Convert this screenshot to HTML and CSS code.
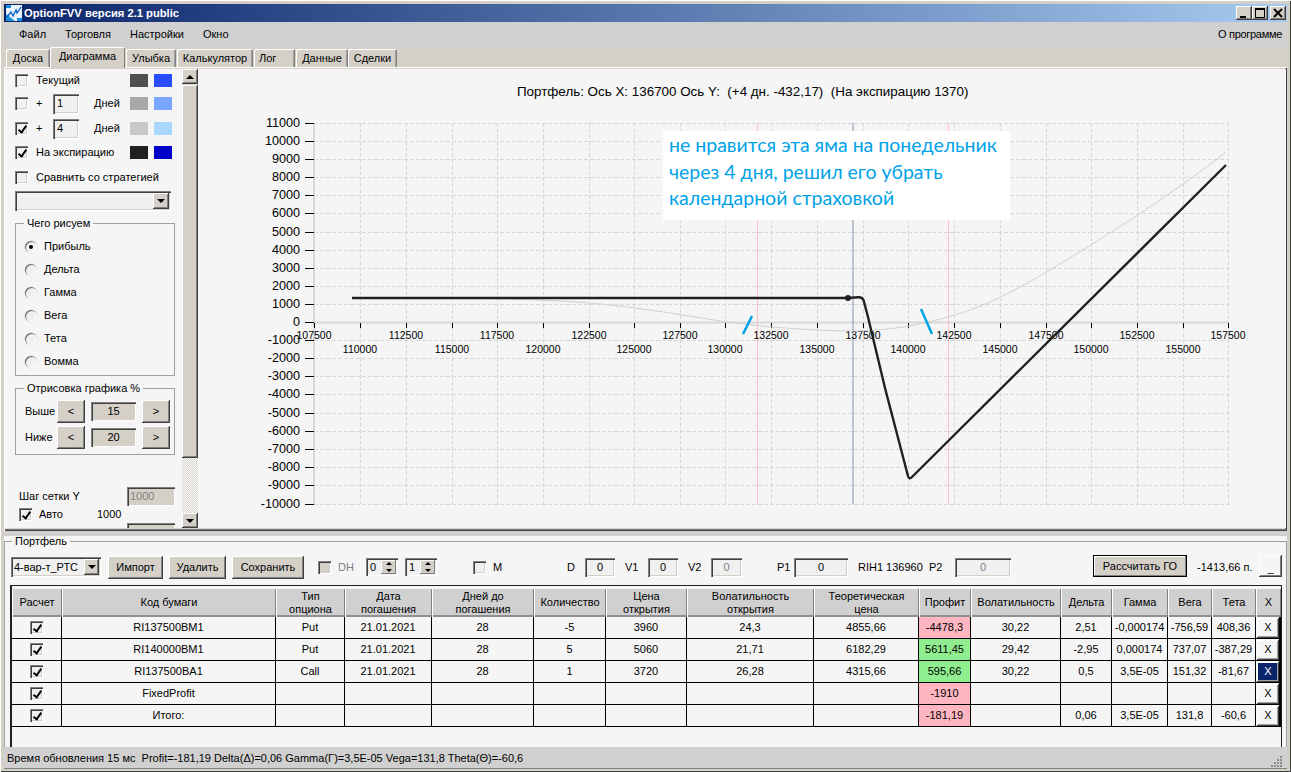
FILE: index.html
```html
<!DOCTYPE html>
<html lang="ru">
<head>
<meta charset="utf-8">
<title>OptionFVV</title>
<link rel="stylesheet" href="styles.css">
</head>
<body>
<div class="window">
  <header class="titlebar">
    <svg class="appicon" viewBox="0 0 16 16"><rect width="16" height="16" fill="#e8f4ff"/><path d="M0 0h5v3H0zM11 13h5v3h-5z" fill="#1a8fe0"/><path d="M0 9v7h9z" fill="#1a8fe0"/><path d="M1 12l4-5 2 4 3-6 1 3 4-6" fill="none" stroke="#0a5fc0" stroke-width="1.3"/></svg>
    <span class="apptitle">OptionFVV версия 2.1 public</span>
    <div class="winbtns">
      <span class="winbtn"><svg viewBox="0 0 16 14"><path d="M4 10h6v2H4z"/></svg></span>
      <span class="winbtn"><svg viewBox="0 0 16 14"><path d="M3 2h10v10H3zM4 4v7h8V4z" fill-rule="evenodd"/></svg></span>
      <span class="winbtn close"><svg viewBox="0 0 16 14"><path d="M4 3l8 8M12 3l-8 8" stroke="#000" stroke-width="2"/></svg></span>
    </div>
  </header>
  <nav class="menubar">
    <span class="mi m1">Файл</span><span class="mi m2">Торговля</span><span class="mi m3">Настройки</span><span class="mi m4">Окно</span>
    <span class="about">О программе</span>
  </nav>
  <div class="tabs">
    <span class="tab t1">Доска</span><span class="tab t2 active">Диаграмма</span><span class="tab t3">Улыбка</span><span class="tab t4">Калькулятор</span><span class="tab t5">Лог</span><span class="tab t6">Данные</span><span class="tab t7">Сделки</span>
  </div>
  <main class="panel">
    <aside class="sidebar">
      <div class="row r1"><span class="cb"></span><span class="lab">Текущий</span><span class="sw s1a"></span><span class="sw s1b"></span></div>
      <div class="row r2"><span class="cb"></span><span class="plus">+</span><span class="edit dayedit">1</span><span class="days">Дней</span><span class="sw s2a"></span><span class="sw s2b"></span></div>
      <div class="row r3"><span class="cb on"></span><span class="plus">+</span><span class="edit dayedit">4</span><span class="days">Дней</span><span class="sw s3a"></span><span class="sw s3b"></span></div>
      <div class="row r4"><span class="cb on"></span><span class="lab">На экспирацию</span><span class="sw s4a"></span><span class="sw s4b"></span></div>
      <div class="row r5"><span class="cb"></span><span class="lab">Сравнить со стратегией</span></div>
      <div class="combo sidecombo"><span class="drop"><i></i></span></div>
      <fieldset class="group radios">
        <legend>Чего рисуем</legend>
        <div class="radio"><span class="rb on"></span>Прибыль</div>
        <div class="radio"><span class="rb"></span>Дельта</div>
        <div class="radio"><span class="rb"></span>Гамма</div>
        <div class="radio"><span class="rb"></span>Вега</div>
        <div class="radio"><span class="rb"></span>Тета</div>
        <div class="radio"><span class="rb"></span>Вомма</div>
      </fieldset>
      <fieldset class="group drawing">
        <legend>Отрисовка графика %</legend>
        <div class="stepper"><span class="steplab">Выше</span><span class="btn stepbtn">&lt;</span><span class="stepval">15</span><span class="btn stepbtn">&gt;</span></div>
        <div class="stepper"><span class="steplab">Ниже</span><span class="btn stepbtn">&lt;</span><span class="stepval">20</span><span class="btn stepbtn">&gt;</span></div>
      </fieldset>
      <div class="gridstep"><span>Шаг сетки Y</span><span class="edit gridedit">1000</span></div>
      <div class="auto"><span class="cb on"></span><span class="autolab">Авто</span><span class="autoval">1000</span></div>
      <div class="edit gridedit cutedit"></div>
    </aside>
    <div class="scrollbar">
      <span class="sbtn"><i class="up"></i></span>
      <span class="sthumb"></span>
      <span class="strack"></span>
      <span class="sbtn"><i></i></span>
    </div>
    <div class="chart">
      <svg class="plot" viewBox="198 69 1088 461" width="1088" height="461">
        <text class="title" x="517" y="96">Портфель: Ось X: 136700 Ось Y:  (+4 дн. -432,17)  (На экспирацию 1370)</text>
        <path class="grid" d="M360.5 123V504M406.5 123V504M452.5 123V504M497.5 123V504M543.5 123V504M589.5 123V504M634.5 123V504M680.5 123V504M725.5 123V504M771.5 123V504M817.5 123V504M863.5 123V504M908.5 123V504M954.5 123V504M1000.5 123V504M1046.5 123V504M1091.5 123V504M1137.5 123V504M1183.5 123V504M1228.5 123V504M314 123.5H1229M314 141.5H1229M314 159.5H1229M314 177.5H1229M314 195.5H1229M314 213.5H1229M314 232.5H1229M314 250.5H1229M314 268.5H1229M314 286.5H1229M314 304.5H1229M314 340.5H1229M314 358.5H1229M314 376.5H1229M314 394.5H1229M314 413.5H1229M314 431.5H1229M314 449.5H1229M314 467.5H1229M314 485.5H1229M314 504.5H1229"/>
        <path class="axis" d="M314 123V504M314 322.5H1229"/>
        <path class="ticks" d="M305 123.5h9M305 141.5h9M305 159.5h9M305 177.5h9M305 195.5h9M305 213.5h9M305 232.5h9M305 250.5h9M305 268.5h9M305 286.5h9M305 304.5h9M305 322.5h9M305 340.5h9M305 358.5h9M305 376.5h9M305 394.5h9M305 413.5h9M305 431.5h9M305 449.5h9M305 467.5h9M305 485.5h9M305 504.5h9M314.5 323v5M360.5 323v5M406.5 323v5M452.5 323v5M497.5 323v5M543.5 323v5M589.5 323v5M634.5 323v5M680.5 323v5M725.5 323v5M771.5 323v5M817.5 323v5M863.5 323v5M908.5 323v5M954.5 323v5M1000.5 323v5M1046.5 323v5M1091.5 323v5M1137.5 323v5M1183.5 323v5M1228.5 323v5"/>
        <path class="vpink" d="M757.5 123V504M948.5 123V504"/>
        <path class="vblue" d="M853 123V504"/>
        <g class="ylab">
          <text x="300" y="127">11000</text><text x="300" y="145">10000</text><text x="300" y="163">9000</text><text x="300" y="181">8000</text><text x="300" y="199">7000</text><text x="300" y="217">6000</text><text x="300" y="236">5000</text><text x="300" y="254">4000</text><text x="300" y="272">3000</text><text x="300" y="290">2000</text><text x="300" y="308">1000</text><text x="300" y="326">0</text><text x="300" y="344">-1000</text><text x="300" y="362">-2000</text><text x="300" y="380">-3000</text><text x="300" y="398">-4000</text><text x="300" y="417">-5000</text><text x="300" y="435">-6000</text><text x="300" y="453">-7000</text><text x="300" y="471">-8000</text><text x="300" y="489">-9000</text><text x="300" y="508">-10000</text>
        </g>
        <g class="xlab">
          <text x="314" y="339">107500</text><text x="406" y="339">112500</text><text x="497" y="339">117500</text><text x="589" y="339">122500</text><text x="680" y="339">127500</text><text x="771" y="339">132500</text><text x="863" y="339">137500</text><text x="954" y="339">142500</text><text x="1046" y="339">147500</text><text x="1137" y="339">152500</text><text x="1228" y="339">157500</text>
          <text x="360" y="353">110000</text><text x="452" y="353">115000</text><text x="543" y="353">120000</text><text x="634" y="353">125000</text><text x="725" y="353">130000</text><text x="817" y="353">135000</text><text x="908" y="353">140000</text><text x="1000" y="353">145000</text><text x="1091" y="353">150000</text><text x="1183" y="353">155000</text>
        </g>
        <path class="curve4" d="M352 298C430 297 500 298 560 301C620 304 670 313 720 321C770 328 820 331 855 331C890 331 925 324 955 315C985 306 1015 291 1050 270C1100 240 1170 196 1226 152"/>
        <path class="curve0" d="M352 298H848L858 297.3Q862 297 863.5 300L868 317L885 388L908 476Q909 480 912 477L1226 165"/>
        <circle class="dot" cx="848" cy="298" r="3"/>
        <path class="mark" d="M743 334L752 316M921 309L932 334"/>
        <rect class="notebox" x="663" y="131" width="347" height="89"/>
        <text class="note" x="669" y="152">не нравится эта яма на понедельник</text>
        <text class="note" x="669" y="179">через 4 дня, решил его убрать</text>
        <text class="note" x="669" y="205">календарной страховкой</text>
      </svg>
    </div>
  </main>
  <div class="splitter"></div>
  <section class="portfolio">
    <fieldset class="pbox">
      <legend>Портфель</legend>
      <div class="toolbar">
        <div class="combo pcombo"><span class="ctext">4-вар-т_РТС</span><span class="drop"><i></i></span></div>
        <span class="btn tb b1">Импорт</span>
        <span class="btn tb b2">Удалить</span>
        <span class="btn tb b3">Сохранить</span>
        <span class="cb dis dhcb"></span><span class="grey dh">DH</span>
        <span class="spin sp1"><span class="spv">0</span><span class="spa"><i class="up"></i><i></i></span></span>
        <span class="spin sp2"><span class="spv">1</span><span class="spa"><i class="up"></i><i></i></span></span>
        <span class="cb mcb"></span><span class="ml">M</span>
        <span class="fl fd">D</span><span class="edit val ed">0</span>
        <span class="fl fv1">V1</span><span class="edit val ed">0</span>
        <span class="fl fv2">V2</span><span class="edit val ed2 off">0</span>
        <span class="fl fp1">P1</span><span class="edit val ep">0</span>
        <span class="fl fr">RIH1 136960&nbsp; P2</span><span class="edit val ep2 off">0</span>
        <span class="btn gobtn">Рассчитать ГО</span>
        <span class="gores">-1413,66 п.</span>
        <span class="btn minbtn">_</span>
      </div>
      <div class="tablewrap">
        <table class="grid-table">
          <colgroup>
            <col class="c1"><col class="c2"><col class="c3"><col class="c4"><col class="c5"><col class="c6"><col class="c7"><col class="c8"><col class="c9"><col class="c10"><col class="c11"><col class="c12"><col class="c13"><col class="c14"><col class="c15"><col class="c16">
          </colgroup>
          <thead>
            <tr><th>Расчет</th><th>Код бумаги</th><th>Тип<br>опциона</th><th>Дата<br>погашения</th><th>Дней до<br>погашения</th><th>Количество</th><th>Цена<br>открытия</th><th>Волатильность<br>открытия</th><th>Теоретическая<br>цена</th><th>Профит</th><th>Волатильность</th><th>Дельта</th><th>Гамма</th><th>Вега</th><th>Тета</th><th>X</th></tr>
          </thead>
          <tbody>
            <tr><td><span class="cb on"></span></td><td>RI137500BM1</td><td>Put</td><td>21.01.2021</td><td>28</td><td>-5</td><td>3960</td><td>24,3</td><td>4855,66</td><td class="loss">-4478,3</td><td>30,22</td><td>2,51</td><td>-0,000174</td><td>-756,59</td><td>408,36</td><td class="xc"><span class="xbtn">X</span></td></tr>
            <tr><td><span class="cb on"></span></td><td>RI140000BM1</td><td>Put</td><td>21.01.2021</td><td>28</td><td>5</td><td>5060</td><td>21,71</td><td>6182,29</td><td class="gain">5611,45</td><td>29,42</td><td>-2,95</td><td>0,000174</td><td>737,07</td><td>-387,29</td><td class="xc"><span class="xbtn">X</span></td></tr>
            <tr><td><span class="cb on"></span></td><td>RI137500BA1</td><td>Call</td><td>21.01.2021</td><td>28</td><td>1</td><td>3720</td><td>26,28</td><td>4315,66</td><td class="gain">595,66</td><td>30,22</td><td>0,5</td><td>3,5E-05</td><td>151,32</td><td>-81,67</td><td class="xc"><span class="xbtn sel">X</span></td></tr>
            <tr><td><span class="cb on"></span></td><td>FixedProfit</td><td></td><td></td><td></td><td></td><td></td><td></td><td></td><td class="loss">-1910</td><td></td><td></td><td></td><td></td><td></td><td class="xc"><span class="xbtn">X</span></td></tr>
            <tr><td><span class="cb on"></span></td><td>Итого:</td><td></td><td></td><td></td><td></td><td></td><td></td><td></td><td class="loss">-181,19</td><td></td><td>0,06</td><td>3,5E-05</td><td>131,8</td><td>-60,6</td><td class="xc"><span class="xbtn">X</span></td></tr>
          </tbody>
        </table>
      </div>
    </fieldset>
  </section>
  <footer class="status">
    <span>Время обновления 15 мс&nbsp; Profit=-181,19 Delta(Δ)=0,06 Gamma(Γ)=3,5E-05 Vega=131,8 Theta(Θ)=-60,6</span>
    <svg class="gripper" viewBox="0 0 12 12"><path d="M9 1h2v2H9zM6 4h2v2H6zM9 4h2v2H9zM3 7h2v2H3zM6 7h2v2H6zM9 7h2v2H9zM0 10h2v2H0zM3 10h2v2H3zM6 10h2v2H6zM9 10h2v2H9z" fill="#8a8a8a"/></svg>
  </footer>
</div>
</body>
</html>
```
FILE: styles.css
```css
* { box-sizing: border-box; }
html, body { margin: 0; padding: 0; }
body { font: 11px/13px "Liberation Sans", Arial, sans-serif; color: #000; background: #d4d0c8; }
.window {
  width: 1291px; height: 772px; padding: 4px 4px 3px; background: #d4d0c8;
  display: flex; flex-direction: column; overflow: hidden;
  box-shadow: inset 1px 1px #fff, inset -1px -1px #404040;
}

.titlebar {
  height: 18px; flex: none; display: flex; align-items: center; padding: 0 1px 0 2px;
  background: linear-gradient(90deg, #0a246a, #a6caf0);
}
.appicon { width: 16px; height: 16px; flex: none; }
.apptitle { margin-left: 2px; color: #fff; font: bold 11.2px/16px "Liberation Sans", sans-serif; }
.winbtns { margin-left: auto; display: flex; }
.winbtn {
  width: 16px; height: 14px; display: block; background: #d4d0c8;
  box-shadow: inset -1px -1px #404040, inset 1px 1px #fff, inset -2px -2px #808080;
}
.winbtn svg { display: block; width: 16px; height: 14px; }
.close { margin-left: 2px; }

.menubar { height: 25px; flex: none; display: flex; align-items: center; background: #d0d0d0; }
.mi { display: block; }
.m1 { margin-left: 15px; }
.m2 { margin-left: 19px; }
.m3 { margin-left: 19px; }
.m4 { margin-left: 19px; }
.about { margin-left: auto; margin-right: 5px; letter-spacing: -.3px; }

.tabs { height: 20px; flex: none; display: flex; align-items: flex-end; padding-left: 2px; position: relative; z-index: 1; }
.tab {
  height: 18px; display: flex; align-items: center; justify-content: center; flex: none; padding-top: 1px;
  background: #d4d0c8; border-radius: 2px 2px 0 0;
  box-shadow: inset 1px 1px #fff, inset -1px 0 #808080, inset -2px 0 #a0a0a0;
}
.tab.active { height: 21px; margin-bottom: -1px; padding: 0 0 2px; box-shadow: inset 1px 1px #fff, inset -1px 0 #808080; }
.t1 { width: 44px; }
.t2 { width: 75px; }
.t3 { width: 50px; margin-left: 1px; }
.t4 { width: 76px; margin-left: 1px; }
.t5 { width: 41px; margin-left: 1px; justify-content: flex-start; padding-left: 5px; }
.t6 { width: 52px; margin-left: 1px; }
.t7 { width: 49px; }

.panel {
  height: 464px; flex: none; display: flex; padding: 2px 1px 3px 1px; background: #d4d0c8;
  box-shadow: inset 1px 1px #fff, inset -1px -1px #404040, inset -2px -2px #808080;
}
.sidebar { width: 177px; flex: none; padding-left: 10px; overflow: hidden; background: #f5f5f5; }

.cb {
  width: 13px; height: 13px; flex: none; display: inline-block; position: relative; background: #f0f0f0;
  box-shadow: inset 1px 1px #808080, inset 2px 2px #404040, inset -1px -1px #fff, inset -2px -2px #d4d0c8;
}
.cb.on::after {
  content: ""; position: absolute; left: 5px; top: 2px; width: 3px; height: 7px;
  border: solid #000; border-width: 0 2px 2px 0; transform: rotate(35deg);
}
.row { display: flex; align-items: center; }
.r1, .r2 { height: 23px; }
.r3 { height: 27px; }
.r4 { height: 21px; }
.r5 { height: 28px; }
.lab { margin-left: 8px; }
.plus { margin-left: 8px; width: 17px; }
.days { margin-left: 15px; width: 36px; }
.edit { display: flex; align-items: center; background: #f0f0f0; box-shadow: inset 1px 1px #808080, inset 2px 2px #404040, inset -1px -1px #fff, inset -2px -2px #d4d0c8; }
.dayedit { width: 26px; height: 20px; padding-left: 4px; }
.sw { width: 18px; height: 13px; flex: none; }
.row .sw:nth-last-child(2) { margin-left: auto; }
.row .sw:last-child { margin-left: 6px; margin-right: 10px; }
.s1a { background: #505050; } .s1b { background: #2a4cff; }
.s2a { background: #a8a8a8; } .s2b { background: #7aa6ff; }
.s3a { background: #c8c8c8; } .s3b { background: #a8d8ff; }
.s4a { background: #202020; } .s4b { background: #0000c8; }

.combo {
  display: flex; align-items: center; height: 20px; background: #f0f0f0; padding: 2px;
  box-shadow: inset 1px 1px #808080, inset 2px 2px #404040, inset -1px -1px #fff, inset -2px -2px #d4d0c8;
}
.sidecombo { width: 156px; justify-content: flex-end; }
.drop {
  width: 16px; height: 16px; flex: none; display: flex; align-items: center; justify-content: center; background: #d4d0c8;
  box-shadow: inset -1px -1px #404040, inset 1px 1px #fff, inset -2px -2px #808080;
}
.drop i { width: 0; height: 0; border: 4px solid transparent; border-top: 4px solid #000; border-bottom: 0; }

.group { width: 160px; margin: 6px 0 0; padding: 0; border: 1px solid #a0a0a0; min-width: 0; }
.group legend { margin-left: -1px; padding: 0 3px; line-height: 13px; }
.radios { padding: 5px 0 2px 9px; }
.radio { height: 23px; display: flex; align-items: center; }
.rb {
  width: 12px; height: 12px; border-radius: 50%; flex: none; margin-right: 7px; position: relative; background: #f0f0f0;
  box-shadow: inset 1px 1px #707070, inset -1px -1px #fff, 0 0 0 .5px #d4d0c8;
}
.rb.on::after { content: ""; position: absolute; left: 4px; top: 4px; width: 4px; height: 4px; border-radius: 50%; background: #000; }
.drawing { padding: 5px 0 5px 9px; }
.stepper { height: 23px; display: flex; align-items: center; margin-bottom: 3px; }
.stepper:last-child { margin-bottom: 0; }
.steplab { width: 32px; flex: none; }
.btn {
  display: flex; align-items: center; justify-content: center; flex: none; background: #d4d0c8;
  box-shadow: inset -1px -1px #404040, inset 1px 1px #fff, inset -2px -2px #808080;
}
.stepbtn { width: 28px; height: 23px; }
.stepval {
  width: 45px; height: 19px; margin: 0 6px; display: flex; align-items: center; justify-content: center; background: #d4d0c8;
  box-shadow: inset 1px 1px #808080, inset 2px 2px #404040, inset -1px -1px #fff;
}
.gridstep { height: 19px; margin: 32px 0 0 4px; display: flex; align-items: center; justify-content: space-between; width: 156px; }
.gridedit { width: 48px; height: 19px; background: #d4d0c8; color: #808080; padding-left: 3px; }
.auto { height: 17px; margin-left: 4px; display: flex; align-items: center; }
.autolab { margin-left: 7px; width: 58px; }
.cutedit { margin: 0 0 0 112px; }

.scrollbar { width: 16px; flex: none; display: flex; flex-direction: column; height: 459px; background: #d4d0c8; }
.sbtn {
  height: 15px; flex: none; display: flex; align-items: center; justify-content: center; background: #d4d0c8;
  box-shadow: inset -1px -1px #404040, inset 1px 1px #fff, inset -2px -2px #808080;
}
.sbtn i, .spa i { width: 0; height: 0; border: 4px solid transparent; border-top: 4px solid #000; border-bottom: 0; }
.sbtn i.up, .spa i.up { border-top: 0; border-bottom: 4px solid #000; }
.sthumb { height: 373px; flex: none; margin-top: 1px; background: #d4d0c8; box-shadow: inset -1px -1px #404040, inset 1px 1px #fff, inset -2px -2px #808080; }
.strack { flex: 1; background: repeating-conic-gradient(#d4d0c8 0 25%, #fff 0 50%) 0 0 / 2px 2px; }

.chart { flex: 1; min-width: 0; height: 459px; overflow: hidden; background: #f5f5f5; }
.plot { display: block; }
.plot text { white-space: pre; font-family: "Liberation Sans", Arial, sans-serif; }
.title { font-size: 13.4px; }
.grid { fill: none; stroke: #d8d8d8; stroke-dasharray: 4 2; stroke-width: 1; }
.axis { fill: none; stroke: #d8d8d8; stroke-width: 2; }
.ticks { fill: none; stroke: #000; stroke-width: 1; }
.vpink { fill: none; stroke: #ffc0cb; stroke-width: 1; }
.vblue { fill: none; stroke: #a0b0c0; stroke-width: 1.4; }
.ylab text { font-size: 12.6px; text-anchor: end; }
.xlab text { font-size: 10.5px; text-anchor: middle; }
.curve4 { fill: none; stroke: #d0d0d0; stroke-width: 1; }
.curve0 { fill: none; stroke: #202020; stroke-width: 2.4; }
.dot { fill: #202020; }
.mark { fill: none; stroke: #00a2e8; stroke-width: 2.5; }
.notebox { fill: #fff; }
.plot .note { font-family: Lato, sans-serif; font-size: 19.5px; fill: #00a2e8; }

.splitter { height: 5px; flex: none; background: #d0d0d0; }
.portfolio { height: 211px; flex: none; background: #f5f5f5; }
.pbox { height: 211px; margin: 0; padding: 0 0 0 5px; border: 1px solid #a0a0a0; border-bottom: 0; min-width: 0; }
.pbox legend { margin-left: 2px; padding: 0 3px; line-height: 11px; }

.toolbar { height: 24px; margin-top: 8px; display: flex; align-items: center; }
.pcombo { width: 90px; padding: 2px 2px 2px 3px; justify-content: space-between; flex: none; margin-left: 1px; }
.ctext { white-space: nowrap; }
.pcombo .drop { width: 15px; }
.tb { height: 23px; }
.b1 { width: 55px; margin-left: 7px; }
.b2 { width: 57px; margin-left: 6px; }
.b3 { width: 72px; margin-left: 6px; }
.dhcb { margin-left: 14px; }
.cb.dis { background: #d4d0c8; }
.grey { color: #808080; }
.dh { margin-left: 7px; width: 21px; }
.spin {
  width: 32px; height: 18px; display: flex; align-items: center; justify-content: space-between; padding: 2px; background: #f0f0f0; flex: none;
  box-shadow: inset 1px 1px #808080, inset 2px 2px #404040, inset -1px -1px #fff;
}
.sp1 { margin-left: 7px; }
.sp2 { margin-left: 7px; }
.spv { padding-left: 2px; }
.spa { width: 15px; height: 14px; display: flex; flex-direction: column; align-items: center; justify-content: space-around; background: #d4d0c8; box-shadow: inset -1px -1px #808080, inset 1px 1px #fff; }
.spa i { border-width: 3px; border-top-width: 3px; }
.spa i.up { border-bottom-width: 3px; }
.mcb { margin-left: 36px; }
.ml { margin-left: 7px; width: 9px; }
.fl { white-space: nowrap; flex: none; }
.val { height: 19px; justify-content: center; flex: none; }
.ed { width: 30px; }
.ed2 { width: 31px; }
.off { color: #808080; }
.ep { width: 54px; }
.ep2 { width: 56px; }
.fd { margin-left: 65px; width: 18px; }
.fv1 { margin-left: 10px; width: 23px; }
.fv2 { margin-left: 10px; width: 23px; }
.fp1 { margin-left: 35px; width: 17px; }
.fr { margin-left: 10px; width: 97px; }
.gobtn { width: 94px; height: 22px; margin: -2px 0 0 82px; box-shadow: 0 0 0 1px #000 inset, inset -2px -2px #808080, inset 2px 2px #fff; }
.gores { margin-left: 10px; width: 62px; flex: none; white-space: nowrap; }
.minbtn { width: 23px; height: 22px; margin-top: -2px; align-items: flex-end; padding-bottom: 2px; background: #f5f5f5; }

.tablewrap { height: 162px; margin: 6px 4px 0 0; padding-top: 3px; border: solid #202020; border-width: 1px 1px 0 2px; overflow: hidden; }
.grid-table { border-collapse: separate; border-spacing: 0; table-layout: fixed; width: 1269px; }
.c1 { width: 50px; } .c2 { width: 214px; } .c3 { width: 69px; } .c4 { width: 87px; }
.c5 { width: 102px; } .c6 { width: 72px; } .c7 { width: 81px; } .c8 { width: 127px; }
.c9 { width: 105px; } .c10 { width: 52px; } .c11 { width: 90px; } .c12 { width: 51px; }
.c13 { width: 56px; } .c14 { width: 44px; } .c15 { width: 44px; } .c16 { width: 25px; }
.grid-table th {
  height: 28px; padding: 0 0 1px; font-weight: normal; text-align: center; background: #d0d0d0; overflow: hidden;
  box-shadow: inset 1px 0 #fff, inset -1px 0 #808080, inset 0 -2px #909090, inset 0 -1px #000;
}
.grid-table td {
  height: 22px; padding: 0; text-align: center; white-space: nowrap; overflow: hidden;
  border-right: 1px solid #000; border-bottom: 1px solid #000; background: #f5f5f5;
}
.grid-table td .cb { vertical-align: middle; }
.grid-table td.loss { background: #ffb6c1; }
.grid-table td.gain { background: #90ee90; }
.grid-table td.xc { padding: 0 0 0 1px; border-right: 2px solid #000; }
.xbtn {
  display: flex; align-items: center; justify-content: center; width: 22px; height: 20px; background: #f5f5f5;
  box-shadow: inset -1px -1px #404040, inset 1px 1px #fff, inset -2px -2px #a0a0a0;
}
.xbtn.sel { background: #0a246a; color: #fff; }

.status { height: 22px; flex: none; display: flex; align-items: center; justify-content: space-between; padding: 0 4px 0 3px; background: #d0d0d0; box-shadow: inset 0 -1px #808080; }
.gripper { width: 12px; height: 12px; align-self: flex-end; margin-bottom: 2px; }
```
